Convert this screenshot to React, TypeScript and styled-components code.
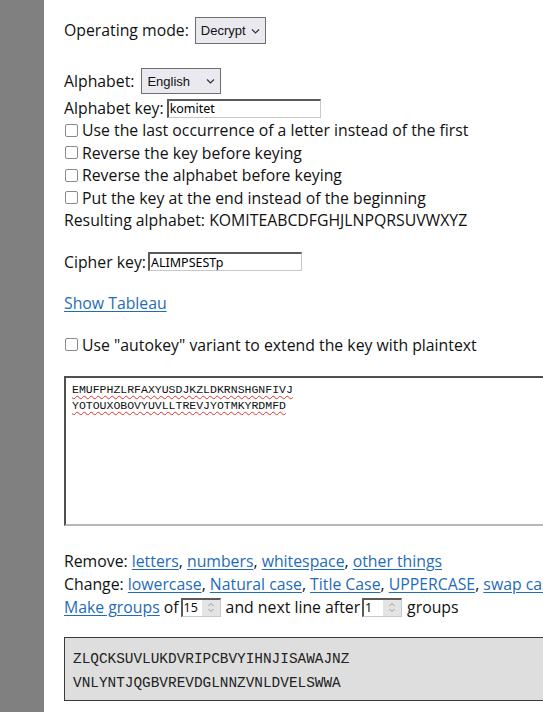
import React from "react";
import styled, { createGlobalStyle } from "styled-components";

const Global = createGlobalStyle`
  html, body { margin: 0; padding: 0; background: #fff; }
  body { overflow: hidden; font-family: "Open Sans", "Noto Sans", sans-serif; }
`;

const Page = styled.div`
  display: flex;
  width: 543px;
  min-height: 712px;
  overflow: hidden;
`;

const Sidebar = styled.div`
  flex: 0 0 44px;
  background: #808080;
`;

const Main = styled.div`
  flex: 0 0 680px;
  padding: 15px 0 0 20px;
  font-size: 15.8px;
  line-height: 22.5px;
  color: #111;
`;

const Row = styled.div<{ $mt?: number; $h?: number }>`
  display: flex;
  align-items: center;
  white-space: nowrap;
  margin-top: ${(p) => p.$mt ?? 0}px;
  min-height: ${(p) => p.$h ?? 22.5}px;
  height: ${(p) => (p.$h ? `${p.$h}px` : "auto")};
`;

const Label = styled.span<{ $gap?: number }>`
  margin-right: ${(p) => p.$gap ?? 6}px;
`;

const SelectWrap = styled.span<{ $w: number; $h: number }>`
  position: relative;
  display: inline-flex;
  width: ${(p) => p.$w}px;
  height: ${(p) => p.$h}px;
`;

const Select = styled.select`
  appearance: none;
  width: 100%;
  height: 100%;
  box-sizing: border-box;
  border: 1px solid #6e6e6e;
  border-radius: 0;
  background: #e9e9ef;
  font-family: "Liberation Sans", "Noto Sans", sans-serif;
  font-size: 13px;
  color: #111;
  padding: 0 18px 0 5px;
  outline: none;
`;

const Chevron = styled.svg`
  position: absolute;
  right: 6px;
  top: 50%;
  margin-top: -2px;
  pointer-events: none;
`;

const TextInput = styled.input<{ $w: number }>`
  width: ${(p) => p.$w}px;
  height: 19px;
  box-sizing: border-box;
  border-style: solid;
  border-width: 2px 1px 1px 2px;
  border-color: #5a5a5a #c8c8c8 #c8c8c8 #5a5a5a;
  font-family: "Noto Sans", "Open Sans", sans-serif;
  font-size: 12.5px;
  padding: 0 1px;
  color: #000;
  outline: none;
`;

const CheckRow = styled.label<{ $mt?: number }>`
  display: flex;
  align-items: center;
  white-space: nowrap;
  min-height: 22.5px;
  margin-top: ${(p) => p.$mt ?? 0}px;
`;

const Box = styled.span`
  width: 11px;
  height: 11px;
  border: 1px solid #8a8a8a;
  border-radius: 2px;
  margin: 0 4px 0 1px;
  background: #fff;
  flex: 0 0 auto;
`;

const Link = styled.a`
  color: #1f6cb8;
  text-decoration: underline;
  text-underline-offset: 2px;
  cursor: pointer;
`;

const TextArea = styled.div`
  margin-top: 20px;
  width: 600px;
  height: 150px;
  box-sizing: border-box;
  border-style: solid;
  border-width: 2px;
  border-color: #505050 #b8b8b8 #b8b8b8 #505050;
  padding: 4px 6px;
  font-family: "Liberation Mono", "DejaVu Sans Mono", monospace;
  font-size: 11.5px;
  line-height: 15.5px;
  color: #111;
`;

const Squiggle = styled.span`
  text-decoration: underline wavy #e03030;
  text-decoration-thickness: 1px;
  text-underline-offset: 2px;
`;

const NumBox = styled.span`
  display: inline-flex;
  align-items: stretch;
  width: 40px;
  height: 19px;
  box-sizing: border-box;
  border-style: solid;
  border-width: 2px 1px 1px 2px;
  border-color: #5a5a5a #c8c8c8 #c8c8c8 #5a5a5a;
  margin: 0 5px 0 2px;
  font-family: "Noto Sans", "Open Sans", sans-serif;
  font-size: 12.5px;
  line-height: 16px;
`;

const NumValue = styled.span`
  flex: 1;
  padding-left: 1px;
`;

const Spinner = styled.span`
  width: 18px;
  background: #e4e4e4;
  display: flex;
  align-items: center;
  justify-content: center;
`;

const Output = styled.div`
  margin-top: 18px;
  width: 600px;
  box-sizing: border-box;
  border: 1px solid #3a3a3a;
  background: #dedede;
  padding: 9px 8px 5px;
  font-family: "Liberation Mono", "DejaVu Sans Mono", monospace;
  font-size: 14.4px;
  line-height: 24px;
  color: #222;
`;

const ChevronDown = () => (
  <Chevron width="9" height="5" viewBox="0 0 9 5">
    <path d="M1 0.5 L4.5 4 L8 0.5" fill="none" stroke="#333" strokeWidth="1.2" />
  </Chevron>
);

const SpinIcon = () => (
  <svg width="8" height="13" viewBox="0 0 8 13">
    <path d="M1.5 5 L4 2.5 L6.5 5" fill="none" stroke="#999" strokeWidth="1" />
    <path d="M1.5 8 L4 10.5 L6.5 8" fill="none" stroke="#999" strokeWidth="1" />
  </svg>
);

const checks = [
  "Use the last occurrence of a letter instead of the first",
  "Reverse the key before keying",
  "Reverse the alphabet before keying",
  "Put the key at the end instead of the beginning",
];

export default function App() {
  return (
    <>
      <Global />
      <Page>
        <Sidebar />
        <Main>
          <Row $mt={2}>
            <Label>Operating mode:</Label>
            <SelectWrap $w={71} $h={27}>
              <Select defaultValue="Decrypt">
                <option>Encrypt</option>
                <option>Decrypt</option>
              </Select>
              <ChevronDown />
            </SelectWrap>
          </Row>

          <Row $mt={24}>
            <Label $gap={7}>Alphabet:</Label>
            <SelectWrap $w={80} $h={26}>
              <Select defaultValue="English">
                <option>English</option>
              </Select>
              <ChevronDown />
            </SelectWrap>
          </Row>
          <Row $mt={3} $h={22}>
            <Label $gap={3}>Alphabet key:</Label>
            <TextInput $w={154} defaultValue="komitet" />
          </Row>
          {checks.map((c) => (
            <CheckRow key={c}>
              <Box />
              {c}
            </CheckRow>
          ))}
          <Row>Resulting alphabet: KOMITEABCDFGHJLNPQRSUVWXYZ</Row>

          <Row $mt={19}>
            <Label $gap={2}>Cipher key:</Label>
            <TextInput $w={154} defaultValue="ALIMPSESTp" />
          </Row>

          <Row $mt={19}>
            <Link>Show Tableau</Link>
          </Row>

          <CheckRow $mt={19}>
            <Box />
            Use "autokey" variant to extend the key with plaintext
          </CheckRow>

          <TextArea>
            <Squiggle>EMUFPHZLRFAXYUSDJKZLDKRNSHGNFIVJ</Squiggle>
            <br />
            <Squiggle>YOTOUXOBOVYUVLLTREVJYOTMKYRDMFD</Squiggle>
          </TextArea>

          <Row $mt={24}>
            Remove:&nbsp;<Link>letters</Link>,&nbsp;<Link>numbers</Link>,&nbsp;
            <Link>whitespace</Link>,&nbsp;<Link>other things</Link>
          </Row>
          <Row>
            Change:&nbsp;<Link>lowercase</Link>,&nbsp;<Link>Natural case</Link>,&nbsp;
            <Link>Title Case</Link>,&nbsp;<Link>UPPERCASE</Link>,&nbsp;<Link>swap case</Link>
          </Row>
          <Row $mt={1}>
            <Link>Make groups</Link>&nbsp;of
            <NumBox>
              <NumValue>15</NumValue>
              <Spinner>
                <SpinIcon />
              </Spinner>
            </NumBox>
            and next line after
            <NumBox>
              <NumValue>1</NumValue>
              <Spinner>
                <SpinIcon />
              </Spinner>
            </NumBox>
            groups
          </Row>

          <Output>
            ZLQCKSUVLUKDVRIPCBVYIHNJISAWAJNZ
            <br />
            VNLYNTJQGBVREVDGLNNZVNLDVELSWWA
          </Output>
        </Main>
      </Page>
    </>
  );
}
